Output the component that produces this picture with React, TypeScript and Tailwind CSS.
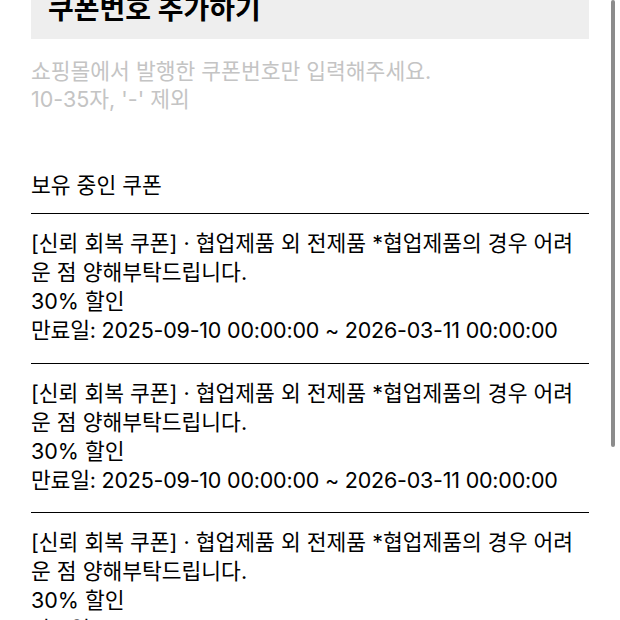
import React from "react";

interface Coupon {
  name: string;
  desc: string;
  discount: string;
  period: string;
}

const coupons: Coupon[] = [
  {
    name: "[신뢰 회복 쿠폰]",
    desc: "· 협업제품 외 전제품 *협업제품의 경우 어려운 점 양해부탁드립니다.",
    discount: "30% 할인",
    period: "만료일: 2025-09-10 00:00:00 ~ 2026-03-11 00:00:00",
  },
  {
    name: "[신뢰 회복 쿠폰]",
    desc: "· 협업제품 외 전제품 *협업제품의 경우 어려운 점 양해부탁드립니다.",
    discount: "30% 할인",
    period: "만료일: 2025-09-10 00:00:00 ~ 2026-03-11 00:00:00",
  },
  {
    name: "[신뢰 회복 쿠폰]",
    desc: "· 협업제품 외 전제품 *협업제품의 경우 어려운 점 양해부탁드립니다.",
    discount: "30% 할인",
    period: "만료일: 2025-09-10 00:00:00 ~ 2026-03-11 00:00:00",
  },
];

const App = () => {
  return (
    <div
      className="relative h-[620px] w-[620px] overflow-hidden bg-white text-black"
      style={{ fontFamily: 'Inter, "Noto Sans CJK KR", sans-serif' }}
    >
      <div className="ml-[31px] w-[558px]">
        {/* header box, scrolled partly off the top */}
        <div className="-mt-[18px] h-[57px] bg-[#eeeeee] pl-[17px] pt-[9px]">
          <h1 className="text-[28px] font-bold leading-[36px]">쿠폰번호 추가하기</h1>
        </div>

        <p className="mt-[18px] text-[21.5px] leading-[28px] text-[#c4c4c4]">
          쇼핑몰에서 발행한 쿠폰번호만 입력해주세요.
          <br />
          10-35자, '-' 제외
        </p>

        <h2 className="mt-[58px] text-[21.5px] leading-[28px]">보유 중인 쿠폰</h2>

        <ul className="mt-[14px]">
          {coupons.map((c, i) => (
            <li key={i} className="border-t-[1.5px] border-black pb-[17.5px] pr-[8px] pt-[15px] text-[21.5px] leading-[29px]">
              <p>
                {c.name} {c.desc}
              </p>
              <p>{c.discount}</p>
              <p className="tracking-[-0.01em]">{c.period}</p>
            </li>
          ))}
        </ul>
      </div>

      {/* scroll indicator */}
      <div className="absolute right-[5px] top-0 h-[447px] w-[4px] rounded-full bg-[#8c8c8c]" />
    </div>
  );
};

export default App;
